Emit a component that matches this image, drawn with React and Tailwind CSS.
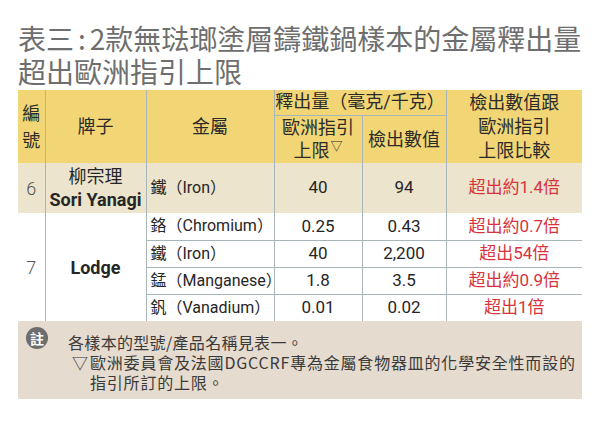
import React from 'react';

const lodgeRows = [
  { metal: '鉻（Chromium）', limit: '0.25', found: '0.43', compare: '超出約0.7倍' },
  { metal: '鐵（Iron）', limit: '40', found: '2,200', compare: '超出54倍' },
  { metal: '錳（Manganese）', limit: '1.8', found: '3.5', compare: '超出約0.9倍' },
  { metal: '釩（Vanadium）', limit: '0.01', found: '0.02', compare: '超出1倍' },
];

const line = 'border-[#a9b6b9]';

const App = () => {
  return (
    <div className="w-[600px] h-[424px] bg-white px-[18px] pt-[22px] font-['Noto_Sans_CJK_TC',sans-serif]">
      <h1 className="text-[28px] leading-[33px] text-[#6e6e6e] font-normal whitespace-nowrap">
        <div>表三<span className="mx-[4px]">:</span>2款無琺瑯塗層鑄鐵鍋樣本的金屬釋出量</div>
        <div>超出歐洲指引上限</div>
      </h1>

      <table className="mt-[2px] w-[564px] table-fixed border-collapse font-['Roboto','Noto_Sans_CJK_TC',sans-serif] text-[#262626]">
        <colgroup>
          <col className="w-[27px]" />
          <col className="w-[101px]" />
          <col className="w-[128px]" />
          <col className="w-[88px]" />
          <col className="w-[84px]" />
          <col className="w-[136px]" />
        </colgroup>
        <thead className="bg-[#f2d675] text-[18px] text-[#2b2b2b]">
          <tr className="h-[25px]">
            <th rowSpan={2} className="font-normal leading-[27px] p-0">
              編<br />號
            </th>
            <th rowSpan={2} className={`font-normal border-l ${line}`}>牌子</th>
            <th rowSpan={2} className={`font-normal border-l ${line}`}>金屬</th>
            <th colSpan={2} className={`font-normal leading-[24px] border-l border-b ${line} whitespace-nowrap`}>
              釋出量（毫克/千克）
            </th>
            <th rowSpan={2} className={`font-normal leading-[24px] border-l ${line}`}>
              檢出數值跟<br />歐洲指引<br />上限比較
            </th>
          </tr>
          <tr className="h-[48px]">
            <th className={`font-normal leading-[23px] border-l ${line}`}>
              歐洲指引<br />上限<sup className="text-[12px] -top-[6px] ml-[1px]">▽</sup>
            </th>
            <th className={`font-normal border-l ${line}`}>檢出數值</th>
          </tr>
        </thead>
        <tbody className="text-[17px]">
          <tr className="h-[50px] bg-[#ece4cc]">
            <td className="text-center text-[18px] text-[#555] font-light">6</td>
            <td className={`text-center leading-[23px] border-l ${line}`}>
              <div className="text-[18px]">柳宗理</div>
              <div className="text-[18px] font-bold whitespace-nowrap">Sori Yanagi</div>
            </td>
            <td className={`pl-[4px] text-[16px] whitespace-nowrap border-l ${line}`}>鐵（Iron）</td>
            <td className={`text-center border-l ${line}`}>40</td>
            <td className={`text-center border-l ${line}`}>94</td>
            <td className={`text-center text-[#d8333d] border-l ${line}`}>超出約1.4倍</td>
          </tr>
          {lodgeRows.map((row, i) => (
            <tr key={row.metal} className="h-[27px]">
              {i === 0 && (
                <>
                  <td rowSpan={4} className="text-center text-[18px] text-[#555] font-light">7</td>
                  <td rowSpan={4} className={`text-center text-[18px] font-bold border-l ${line}`}>Lodge</td>
                </>
              )}
              <td className={`pl-[4px] text-[16px] leading-none whitespace-nowrap border-l ${line} ${i > 0 ? 'border-t' : ''}`}>
                {row.metal}
              </td>
              <td className={`text-center leading-none border-l ${line} ${i > 0 ? 'border-t' : ''}`}>{row.limit}</td>
              <td className={`text-center leading-none border-l ${line} ${i > 0 ? 'border-t' : ''}`}>{row.found}</td>
              <td className={`text-center leading-none text-[#d8333d] border-l ${line} ${i > 0 ? 'border-t' : ''}`}>
                {row.compare}
              </td>
            </tr>
          ))}
        </tbody>
      </table>

      <div className="w-[564px] bg-[#e5dbce] flex pt-[6px] pb-[7px] pl-[8px] pr-[4px]">
        <div className="w-[22px] h-[22px] rounded-full bg-[#6d6d6d] text-white text-[14px] leading-[22px] text-center font-bold shrink-0">
          註
        </div>
        <div className="ml-[20px] pt-[5px] text-[16px] leading-[20px] text-[#3a3a3a]">
          <div className="tracking-[0.02em]">各樣本的型號/產品名稱見表一。</div>
          <div className="flex">
            <span className="w-[22px] pl-[4px] shrink-0 leading-[20px]">▽</span>
            <span className="tracking-[0.05em]">
              歐洲委員會及法國DGCCRF專為金屬食物器皿的化學安全性而設的<br />指引所訂的上限。
            </span>
          </div>
        </div>
      </div>
    </div>
  );
};

export default App;
